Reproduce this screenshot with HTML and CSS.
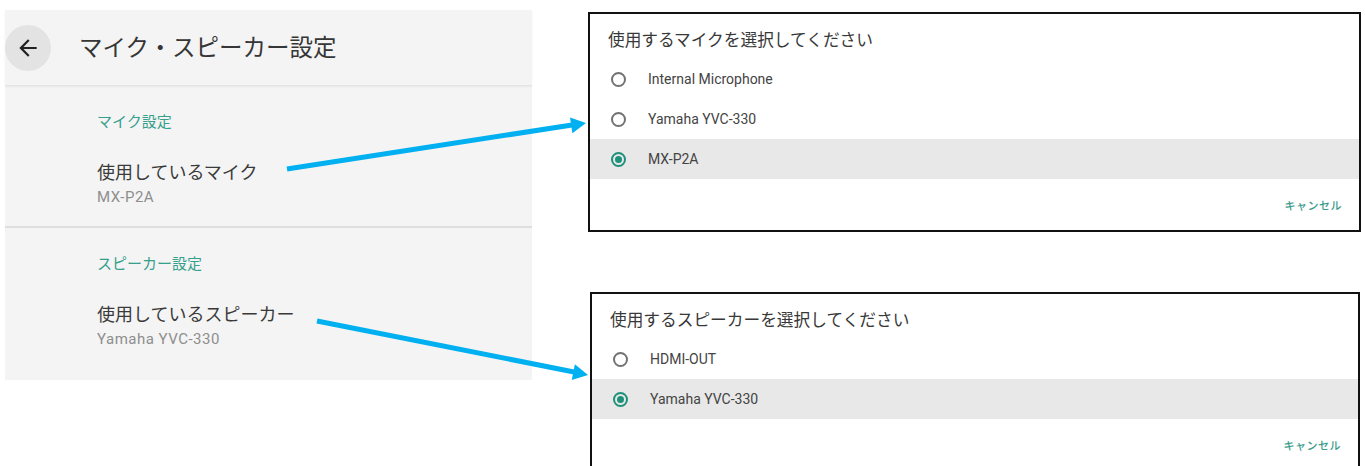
FILE: index.html
```html
<!DOCTYPE html>
<html lang="ja">
<head>
  <meta charset="UTF-8" />
  <title>マイク・スピーカー設定</title>
  <link rel="stylesheet" href="styles.css">
</head>
<body>
  <div class="settings">
    <div class="header">
      <button class="back">
        <svg width="26" height="26" viewBox="0 0 24 24"><path d="M20 11H7.83l5.59-5.59L12 4l-8 8 8 8 1.41-1.41L7.83 13H20v-2z" fill="#222"/></svg>
      </button>
      <div class="title">マイク・スピーカー設定</div>
    </div>
    <div class="section">
      <div class="category">マイク設定</div>
      <div class="item">
        <div class="item-title">使用しているマイク</div>
        <div class="item-sub">MX-P2A</div>
      </div>
    </div>
    <div class="section">
      <div class="category">スピーカー設定</div>
      <div class="item">
        <div class="item-title">使用しているスピーカー</div>
        <div class="item-sub">Yamaha YVC-330</div>
      </div>
    </div>
  </div>

  <div class="dialogs">
    <div class="dialog dialog-mic">
      <div class="dialog-title">使用するマイクを選択してください</div>
      <div class="option"><span class="radio"></span>Internal Microphone</div>
      <div class="option"><span class="radio"></span>Yamaha YVC-330</div>
      <div class="option selected"><span class="radio"></span>MX-P2A</div>
      <div class="dialog-footer"><span class="cancel">キャンセル</span></div>
    </div>
    <div class="dialog dialog-speaker">
      <div class="dialog-title">使用するスピーカーを選択してください</div>
      <div class="option"><span class="radio"></span>HDMI-OUT</div>
      <div class="option selected"><span class="radio"></span>Yamaha YVC-330</div>
      <div class="dialog-footer"><span class="cancel">キャンセル</span></div>
    </div>
  </div>

  <!-- callout arrows over the screenshots -->
  <svg class="arrows" width="1365" height="466" viewBox="0 0 1365 466">
    <line x1="287" y1="169" x2="572" y2="125" stroke="#00b0f0" stroke-width="5"/>
    <polygon points="586,123 572.4,133.2 570,117.4" fill="#00b0f0"/>
    <line x1="317" y1="321" x2="574" y2="372" stroke="#00b0f0" stroke-width="5"/>
    <polygon points="588,375 571.7,380 574.9,364.3" fill="#00b0f0"/>
  </svg>
</body>
</html>
```

FILE: styles.css
```css
body {
  margin: 0;
  padding: 10px 0 0 5px;
  background: #fff;
  font-family: Roboto, "Noto Sans CJK JP", sans-serif;
  color: #333;
  display: flex;
  align-items: flex-start;
  height: 466px;
  box-sizing: border-box;
  overflow: hidden;
  position: relative;
}

.settings {
  width: 527px;
  height: 370px;
  background: #f4f4f4;
  flex-shrink: 0;
}

.header {
  height: 75px;
  display: flex;
  align-items: center;
  border-bottom: 1px solid #e4e4e4;
  box-shadow: 0 1px 2px rgba(0, 0, 0, 0.06);
}

.back {
  width: 46px;
  height: 46px;
  border: none;
  border-radius: 50%;
  background: #e3e3e3;
  padding: 0;
  display: flex;
  align-items: center;
  justify-content: center;
}

.title {
  margin-left: 28px;
  font-size: 23.5px;
  line-height: 32px;
  color: #363636;
}

.section {
  padding: 26px 0 0 92px;
  height: 114px;
}

.section + .section {
  border-top: 2px solid #dedede;
  height: 125px;
}

.category {
  font-size: 15px;
  line-height: 20px;
  color: #35a08b;
}

.item {
  margin-top: 29px;
}

.item-title {
  font-size: 18px;
  line-height: 24px;
  color: #3a3a3a;
}

.item-sub {
  margin-top: 2px;
  font-size: 15px;
  line-height: 20px;
  letter-spacing: 0.5px;
  color: #8e8e8e;
}

.dialogs {
  margin-left: 56px;
  display: flex;
  flex-direction: column;
}

.dialog {
  width: 773px;
  border: 2px solid #111;
  background: #fff;
  box-sizing: border-box;
}

.dialog-mic {
  margin-top: 2px;
}

.dialog-speaker {
  margin-top: 60px;
  margin-left: 2px;
  width: 770px;
}

.dialog-title {
  padding: 17px 18px 0;
  margin-bottom: 8px;
  font-size: 16.7px;
  line-height: 20px;
  color: #383838;
}

.option {
  height: 40px;
  display: flex;
  align-items: center;
  padding-left: 21px;
  font-size: 14px;
  color: #444;
}

.option.selected {
  background: #e8e8e8;
}

.radio {
  width: 15px;
  height: 15px;
  border: 2px solid #737373;
  border-radius: 50%;
  box-sizing: border-box;
  margin-right: 22px;
  display: flex;
  align-items: center;
  justify-content: center;
}

.selected .radio {
  border-color: #1e917b;
}

.selected .radio::after {
  content: "";
  width: 7px;
  height: 7px;
  border-radius: 50%;
  background: #1e917b;
}

.dialog-footer {
  height: 51px;
  display: flex;
  align-items: center;
  justify-content: flex-end;
  padding-right: 17px;
}

.cancel {
  font-size: 11px;
  font-weight: 500;
  color: #3a9a8a;
  letter-spacing: 0.5px;
}

.arrows {
  position: absolute;
  top: 0;
  left: 0;
  pointer-events: none;
}
```
